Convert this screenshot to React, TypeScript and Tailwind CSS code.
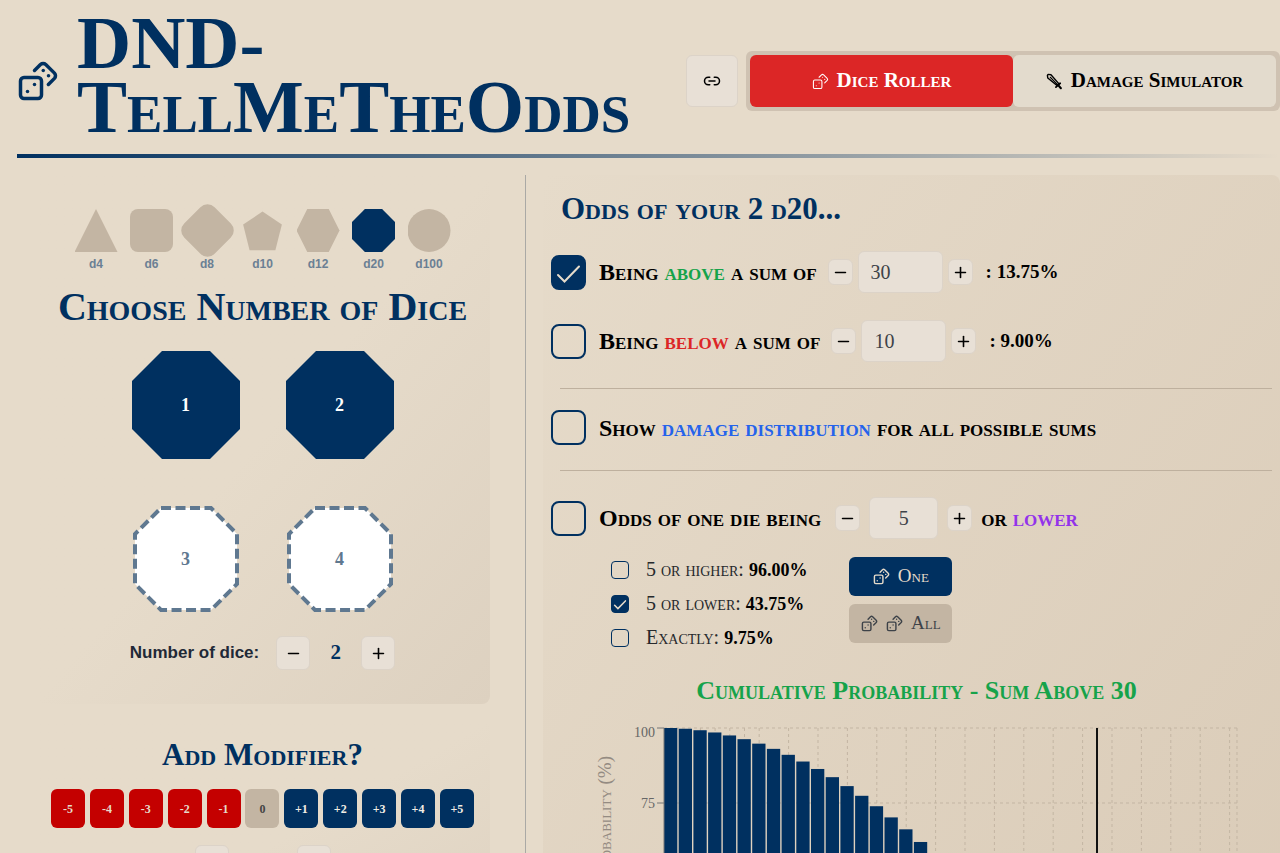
import { useState, type ReactNode } from 'react';
import { Dices, Link2, Minus, Plus } from 'lucide-react';

const serif = "font-['Liberation_Serif',serif] [font-variant-caps:small-caps]";

const dice = [
  { name: 'd4', shape: 'polygon(50% 0, 100% 100%, 0 100%)' },
  { name: 'd6', shape: 'inset(0 round 8px)' },
  { name: 'd8', shape: '' },
  { name: 'd10', shape: 'polygon(50% 6%, 95% 36%, 80% 96%, 20% 96%, 5% 36%)' },
  { name: 'd12', shape: 'polygon(25% 0, 75% 0, 100% 50%, 75% 100%, 25% 100%, 0 50%)' },
  { name: 'd20', shape: 'polygon(30% 0, 70% 0, 100% 30%, 100% 70%, 70% 100%, 30% 100%, 0 70%, 0 30%)' },
  { name: 'd100', shape: 'circle(50%)' },
];

const modifiers = [-5, -4, -3, -2, -1, 0, 1, 2, 3, 4, 5];

function SwordIcon() {
  return (
    <svg viewBox="0 0 24 24" fill="none" stroke="currentColor" strokeWidth="2" strokeLinecap="round" strokeLinejoin="round" className="h-[17px] w-[17px]">
      <path d="M2 3.500L3 2l4 .5L18 15 15.500 17.500 2.500 7Z" />
      <path d="M6 6l10 10" strokeWidth="1.500" />
      <path d="M14 20L20 14.500" strokeWidth="2.500" />
      <path d="M17.500 17.500L21 21.500" strokeWidth="3" />
    </svg>
  );
}

function Stepper({ icon, label, large, onClick }: { icon: 'minus' | 'plus'; label: string; large?: boolean; onClick?: () => void }) {
  const Icon = icon === 'minus' ? Minus : Plus;
  return (
    <button
      aria-label={label}
      onClick={onClick}
      className={`flex shrink-0 items-center justify-center rounded-md border border-[#dcd3c8] bg-[#e8e0d6] text-black ${large ? 'h-[34px] w-[34px]' : 'h-[26px] w-[25px]'}`}
    >
      <Icon className="h-[17px] w-[17px] shrink-0" strokeWidth={2.25} />
    </button>
  );
}

function Check({ id, checked, small }: { id: string; checked?: boolean; small?: boolean }) {
  const [on, setOn] = useState(!!checked);
  return (
    <span className={`relative shrink-0 ${small ? 'h-[18px] w-[18px]' : 'h-[35px] w-[35px]'}`}>
      <input
        id={id}
        type="checkbox"
        checked={on}
        onChange={() => setOn(!on)}
        className={`block h-full w-full appearance-none border-[#003060] checked:bg-[#003060] ${small ? 'rounded border' : 'rounded-lg border-2'}`}
      />
      {on && (
        <svg viewBox="0 0 35 35" fill="none" stroke="#e6dccb" strokeWidth={small ? 3 : 2} className="pointer-events-none absolute inset-0 h-full w-full">
          <path d="M7 20l6.500 6.500L28 11.500" strokeLinecap="round" />
        </svg>
      )}
    </span>
  );
}

function SumRow({ id, word, color, value, odds, checked }: { id: string; word: string; color: string; value: number; odds: string; checked?: boolean }) {
  const [sum, setSum] = useState(value);
  return (
    <div className="flex h-[42px] items-center">
      <Check id={id} checked={checked} />
      <label htmlFor={id} className="ml-[13px] text-2xl leading-8 font-bold whitespace-nowrap">
        Being <span className={color}>{word}</span> a sum of
      </label>
      <div className="ml-[11px] flex items-center gap-[5px]">
        <Stepper icon="minus" label={`Decrease ${word} sum`} onClick={() => setSum(sum - 1)} />
        <input
          aria-label={`Sum ${word}`}
          value={sum}
          onChange={(e) => setSum(Number(e.target.value) || 0)}
          className="h-[42px] w-[85px] rounded-md border border-[#dcd3c8] bg-[#e8e0d6] px-3 text-xl text-[#3d4248]"
        />
        <Stepper icon="plus" label={`Increase ${word} sum`} onClick={() => setSum(sum + 1)} />
      </div>
      <span className="ml-[13px] text-[19px] font-bold whitespace-nowrap">: {odds}</span>
    </div>
  );
}

function OddsLine({ id, checked, value, children }: { id: string; checked?: boolean; value: string; children: ReactNode }) {
  return (
    <div className="flex items-center gap-[17px]">
      <Check id={id} small checked={checked} />
      <label htmlFor={id} className="text-xl leading-6 whitespace-nowrap text-[#26292c]">
        {children} <b className="text-lg leading-6 text-black">{value}</b>
      </label>
    </div>
  );
}

function DieSlot({ n, filled }: { n: number; filled: boolean }) {
  return (
    <button className="relative h-[108px] w-[108px]" aria-pressed={filled}>
      <svg viewBox="0 0 108 108" className="h-full w-full">
        {filled ? (
          <path d="M30 0H78L108 30V78L78 108H30L0 78V30Z" fill="#003060" />
        ) : (
          <path d="M29 3H79L105 29V79L79 105H29L3 79V29Z" fill="#fff" stroke="#5f7890" strokeWidth="4" strokeDasharray="10 4.500" />
        )}
      </svg>
      <span className={`absolute inset-0 flex items-center justify-center text-lg font-bold ${filled ? 'text-white' : 'text-[#5f7890]'}`}>{n}</span>
    </button>
  );
}

// chance in percent that two d20 add up to at least the given sum
function atLeast(sum: number) {
  let hits = 0;
  for (let a = 1; a <= 20; a++) for (let b = 1; b <= 20; b++) if (a + b >= sum) hits++;
  return hits / 4;
}

function Chart() {
  const sums = Array.from({ length: 39 }, (_, i) => i + 2);
  const lines = [4, 5, 6, 7, 8, 10, 12, 14, 16, 18, 20, 22, 24, 26, 28, 30, 32, 34, 36, 38, 40];
  const step = 14.7;
  return (
    <svg viewBox="0 0 680 440" className="block w-[680px] max-w-none" role="img" aria-label="Cumulative probability">
      <g stroke="#c3b5a3" strokeDasharray="3 3">
        {[8, 83, 157, 232, 306].map((y) => <path key={y} d={`M104 ${y}H677`} />)}
        {lines.map((s) => <path key={s} d={`M${104 + (s - 2) * step + 7} 8V306`} />)}
        <path d="M677 8V306" />
      </g>
      {sums.map((s, i) => (
        <rect key={s} x={104 + i * step} y={306 - atLeast(s) * 2.98} width="13.300" height={atLeast(s) * 2.98} fill="#003060" />
      ))}
      <path d="M537 8V306" stroke="#111" strokeWidth="2" />
      <path d="M97 8h7M97 83h7M97 157h7M97 232h7M97 306h7M104 8V306" stroke="#777" />
      <g fill="#666" fontSize="14" textAnchor="end">
        <text x="95" y="17">100</text>
        <text x="95" y="88">75</text>
        <text x="95" y="162">50</text>
        <text x="95" y="237">25</text>
        <text x="95" y="311">0</text>
      </g>
      <text transform="translate(51 36) rotate(-90)" textAnchor="end" fill="#948b82" fontSize="19">Probability (%)</text>
    </svg>
  );
}

export default function App() {
  const [count, setCount] = useState(2);
  const [die, setDie] = useState('d20');

  return (
    <div className={`h-screen overflow-hidden bg-[#e6dbca] text-black ${serif}`}>
      <header className="ml-[17px]">
        <div className="flex h-[154px] items-center pt-2">
          <Dices className="h-[42px] w-[42px] shrink-0 text-[#003060]" />
          <h1 className="ml-[18px] w-[556px] shrink-0 pb-3 text-[75px] leading-[64px] font-bold text-[#003060]">
            DND-
            <br />
            TellMeTheOdds
          </h1>
          <div className="ml-auto flex shrink-0 items-center gap-2">
            <button aria-label="Copy link" className="flex h-[52px] w-[52px] items-center justify-center rounded-md border border-[#dcd3c8] bg-[#e8e0d6]">
              <Link2 className="h-[18px] w-[18px]" />
            </button>
            <nav className="flex rounded-md bg-[#cfc2b2] p-1">
              <button className="flex h-[52px] w-[263px] items-center justify-center gap-2 rounded-md bg-[#dc2626] text-[21px] font-bold text-white">
                <Dices className="h-[17px] w-[17px]" strokeWidth={1.5} />
                Dice Roller
              </button>
              <button className="flex h-[52px] w-[263px] items-center justify-center gap-2 rounded-md bg-[#e3dbcd] text-[21px] font-bold">
                <SwordIcon />
                Damage Simulator
              </button>
            </nav>
          </div>
        </div>
        <div className="h-1 bg-linear-to-r from-[#003060] to-transparent" />
      </header>

      <main className="mt-[17px] ml-[35px] flex">
        <aside className="w-[455px] shrink-0">
          <section className="flex h-[529px] flex-col items-center rounded-lg bg-linear-to-br from-[#e6dbca] from-50% to-[#ddd1c0]">
            <div className="mt-[34px] flex w-[376px] justify-between">
              {dice.map(({ name, shape }) => (
                <button key={name} onClick={() => setDie(name)} className="flex w-[43px] flex-col items-center">
                  <span
                    className={`h-[43px] w-[43px] ${name === 'd8' ? 'rotate-45 rounded-[10px]' : ''} ${die === name ? 'bg-[#003060]' : 'bg-[#c3b5a3]'}`}
                    style={{ clipPath: shape || undefined }}
                  />
                  <span className="mt-1 font-['Liberation_Sans',sans-serif] text-xs leading-4 font-bold text-[#6b8094] [font-variant-caps:normal]">{name}</span>
                </button>
              ))}
            </div>
            <h2 className="mt-[15px] text-[40px] leading-10 font-bold whitespace-nowrap text-[#003060]">Choose Number of Dice</h2>
            <div className="mt-6 grid grid-cols-2 gap-[46px]">
              {[1, 2, 3, 4].map((n) => <DieSlot key={n} n={n} filled={n <= count} />)}
            </div>
            <div className="mt-[23px] flex items-center">
              <span className="font-['Liberation_Sans',sans-serif] text-[17px] font-bold text-[#1f2937] [font-variant-caps:normal]">Number of dice:</span>
              <div className="ml-[17px] flex items-center">
                <Stepper icon="minus" label="Fewer dice" large onClick={() => setCount(Math.max(1, count - 1))} />
                <span className="w-[51px] text-center text-[21px] font-bold text-[#003060]">{count}</span>
                <Stepper icon="plus" label="More dice" large onClick={() => setCount(count + 1)} />
              </div>
            </div>
          </section>
          <section className="mt-[17px] flex h-[260px] flex-col items-center rounded-lg bg-linear-to-br from-[#e6dbca] from-50% to-[#ddd1c0]">
            <h2 className="mt-4 text-[31px] leading-9 font-bold whitespace-nowrap text-[#003060]">Add Modifier?</h2>
            <div className="mt-4 flex w-[423px] justify-between">
              {modifiers.map((m) => (
                <button
                  key={m}
                  className={`h-[39px] w-[34px] rounded-md text-xs font-bold ${m < 0 ? 'bg-[#c40000] text-[#e6dbca]' : m > 0 ? 'bg-[#003060] text-[#f3eee5]' : 'bg-[#c3b5a3] text-[#444]'}`}
                >
                  {m > 0 ? `+${m}` : m}
                </button>
              ))}
            </div>
            <div className="mt-[17px] flex gap-[68px]">
              <Stepper icon="minus" label="Lower modifier" large />
              <Stepper icon="plus" label="Raise modifier" large />
            </div>
          </section>
        </aside>

        <div className="ml-[35px] w-px shrink-0 bg-[#aaa9a5]" />

        <section className="ml-[17px] min-w-0 flex-1 rounded-lg bg-linear-to-br from-[#e6dbca] to-[#d9cab6]">
          <h2 className="mt-4 ml-[18px] text-[31px] leading-9 font-bold text-[#003060]">Odds of your {count} {die}...</h2>
          <div className="mt-6 ml-2">
            <SumRow id="above" word="above" color="text-[#16a34a]" value={30} odds="13.75%" checked />
            <div className="mt-[27px]">
              <SumRow id="below" word="below" color="text-[#dc2626]" value={10} odds="9.00%" />
            </div>
          </div>
          <hr className="mt-[26px] mr-2 ml-[17px] border-[#beb09e]" />
          <div className="ml-2 flex h-[81px] items-center pb-1">
            <Check id="distribution" />
            <label htmlFor="distribution" className="ml-[13px] text-2xl leading-8 font-bold whitespace-nowrap">
              Show <span className="text-[#2563eb]">damage distribution</span> for all possible sums
            </label>
          </div>
          <hr className="mr-2 ml-[17px] border-[#beb09e]" />
          <div className="mt-[26px] ml-2 flex h-[42px] items-center">
            <Check id="one-die" />
            <label htmlFor="one-die" className="ml-[13px] text-2xl leading-8 font-bold whitespace-nowrap">Odds of one die being</label>
            <div className="ml-[14px] flex items-center gap-[9px]">
              <Stepper icon="minus" label="Decrease value" />
              <input aria-label="Die value" defaultValue="5" className="h-[42px] w-[69px] rounded-md border border-[#dcd3c8] bg-[#e8e0d6] text-center text-xl text-[#3d4248]" />
              <Stepper icon="plus" label="Increase value" />
            </div>
            <span className="ml-[9px] text-2xl leading-8 font-bold">or <span className="text-[#9333ea]">lower</span></span>
          </div>
          <div className="mt-[18px] ml-[68px] flex gap-[42px]">
            <div className="flex flex-col gap-[9px]">
              <OddsLine id="higher" value="96.00%">5 or higher:</OddsLine>
              <OddsLine id="lower" value="43.75%" checked>5 or lower:</OddsLine>
              <OddsLine id="exact" value="9.75%">Exactly:</OddsLine>
            </div>
            <div className="flex w-[103px] flex-col gap-2">
              <button className="flex h-[39px] items-center justify-center gap-2 rounded-md bg-[#003060] text-[19px] text-[#e6dbca]">
                <Dices className="h-[17px] w-[17px]" />
                One
              </button>
              <button className="flex h-[39px] items-center justify-center gap-2 rounded-md bg-[#c3b5a3] text-[19px] text-[#3d4248]">
                <Dices className="h-[17px] w-[17px]" />
                <Dices className="h-[17px] w-[17px]" />
                All
              </button>
            </div>
          </div>
          <h3 className="mt-[25px] ml-[10px] text-center text-[26px] leading-8 font-bold text-[#16a34a]">Cumulative Probability - Sum Above 30</h3>
          <div className="mt-[13px] ml-[17px]">
            <Chart />
          </div>
        </section>
      </main>
    </div>
  );
}
